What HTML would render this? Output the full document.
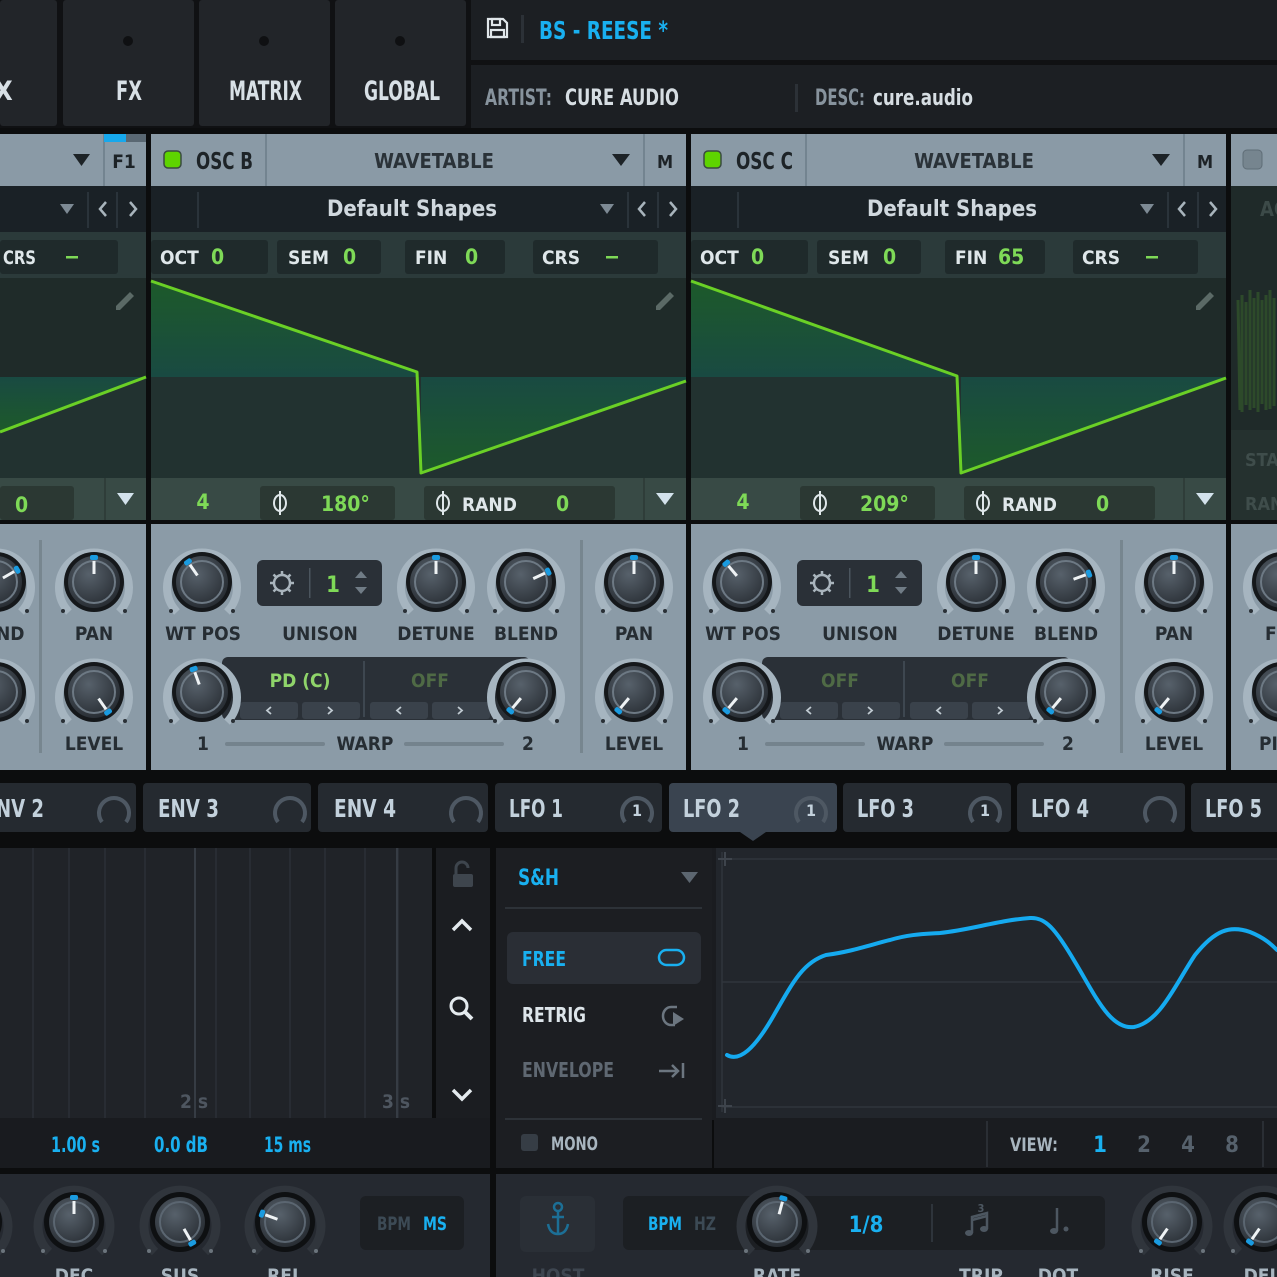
<!DOCTYPE html>
<html><head><meta charset="utf-8"><style>
html,body{margin:0;padding:0;background:#0b0c0d;width:1277px;height:1277px;overflow:hidden}
svg text{font-family:"Liberation Sans Narrow","DejaVu Sans Condensed","Liberation Sans",sans-serif;font-weight:bold}
</style></head><body>
<svg width="1277" height="1277" viewBox="0 0 1277 1277" xmlns="http://www.w3.org/2000/svg">
<defs>
<radialGradient id="kg" cx="40%" cy="35%" r="70%"><stop offset="0" stop-color="#57616b"/><stop offset="1" stop-color="#262b31"/></radialGradient>
<linearGradient id="wg" x1="0" y1="0" x2="0" y2="1"><stop offset="0" stop-color="#1d5a2a"/><stop offset="1" stop-color="#194a42"/></linearGradient>
<linearGradient id="wg2" x1="0" y1="0" x2="0" y2="1"><stop offset="0" stop-color="#194a42"/><stop offset="1" stop-color="#1d5a2a"/></linearGradient>
<symbol id="kl" overflow="visible">
<path d="M-25 30 A35 35 0 1 1 25 30" fill="none" stroke="#a6b5c0" stroke-width="8"/>
<circle r="30" fill="#15181b"/><circle r="26" fill="url(#kg)"/><circle r="21" fill="none" stroke="#6d7984" stroke-width="2"/>
<circle cx="-31" cy="29" r="2" fill="#2a3036"/><circle cx="31" cy="29" r="2" fill="#2a3036"/>
</symbol>
<symbol id="kd" overflow="visible">
<path d="M-25 30 A36 36 0 1 1 25 30" fill="none" stroke="#30353c" stroke-width="9"/>
<circle r="30" fill="#0e1012"/><circle r="25" fill="url(#kg)"/><circle r="20" fill="none" stroke="#5b6671" stroke-width="2"/>
<circle cx="-31" cy="29" r="2" fill="#6b747c"/><circle cx="31" cy="29" r="2" fill="#6b747c"/>
</symbol>
<symbol id="ind" overflow="visible"><line x1="0" y1="-8" x2="0" y2="-21" stroke="#eef2f4" stroke-width="3"/><rect x="-4" y="-27" width="8" height="5" rx="2" fill="#1a9be0"/></symbol>
</defs>

<rect x="0" y="0" width="1277" height="134" fill="#101113"/>
<rect x="0" y="0" width="57" height="126" rx="3" fill="#222529"/>
<rect x="63" y="0" width="131" height="126" rx="3" fill="#222529"/>
<rect x="199" y="0" width="131" height="126" rx="3" fill="#222529"/>
<rect x="335" y="0" width="131" height="126" rx="3" fill="#222529"/>
<circle cx="128" cy="41" r="5" fill="#0f1012"/><circle cx="264" cy="41" r="5" fill="#0f1012"/><circle cx="400" cy="41" r="5" fill="#0f1012"/>
<g font-size="27" fill="#d8e0e6"><text x="-6" y="100">X</text><text x="116" y="100" textLength="26" lengthAdjust="spacingAndGlyphs">FX</text><text x="229" y="100" textLength="73" lengthAdjust="spacingAndGlyphs">MATRIX</text><text x="364" y="100" textLength="76" lengthAdjust="spacingAndGlyphs">GLOBAL</text></g>
<rect x="471" y="0" width="806" height="60" fill="#1c1f23"/>
<rect x="471" y="65" width="806" height="63" fill="#1c1f23"/>
<g fill="none" stroke="#e0e6ea" stroke-width="2.2"><path d="M488 19h15l4 4v14h-19z"/><rect x="492" y="19" width="8" height="6"/><rect x="491" y="30" width="13" height="7"/></g>
<rect x="521" y="15" width="3" height="28" fill="#2c3137"/>
<text x="539" y="39" font-size="25" fill="#19b0f0" textLength="129" lengthAdjust="spacingAndGlyphs">BS - REESE *</text>
<text x="485" y="105" font-size="22" fill="#87939d" textLength="67" lengthAdjust="spacingAndGlyphs">ARTIST:</text>
<text x="565" y="105" font-size="22" fill="#d6dde2" font-weight="normal" textLength="114" lengthAdjust="spacingAndGlyphs">CURE AUDIO</text>
<rect x="795" y="84" width="3" height="28" fill="#2c3137"/>
<text x="815" y="105" font-size="22" fill="#87939d" textLength="50" lengthAdjust="spacingAndGlyphs">DESC:</text>
<text x="873" y="105" font-size="22" fill="#d6dde2" font-weight="normal" textLength="100" lengthAdjust="spacingAndGlyphs">cure.audio</text>

<rect x="0" y="128" width="1277" height="654" fill="#0c0d0e"/>

<rect x="0" y="134" width="146" height="52" fill="#8a9aa6"/>
<path d="M73 154h17l-8.5 12z" fill="#1d2327"/>
<rect x="103" y="134" width="2" height="52" fill="#738490"/>
<rect x="104" y="134" width="22" height="8" fill="#17a8ec"/><rect x="126" y="134" width="20" height="8" fill="#5a6873"/>
<text x="124" y="168" font-size="19" fill="#1d2327" text-anchor="middle">F1</text>
<rect x="0" y="186" width="146" height="46" fill="#1a2126"/>
<path d="M60 204h14l-7 10z" fill="#7d8a94"/>
<rect x="87" y="192" width="2" height="36" fill="#2a333a"/><rect x="116" y="192" width="2" height="36" fill="#2a333a"/>
<path d="M106 202l-6 7 6 7M130 202l6 7-6 7" fill="none" stroke="#a8b4bc" stroke-width="2.5"/>
<rect x="0" y="232" width="146" height="46" fill="#2b3a3a"/>
<rect x="0" y="240" width="118" height="34" rx="3" fill="#1f2a2b"/>
<text x="3" y="264" font-size="19" fill="#dfe7ea" textLength="33" lengthAdjust="spacingAndGlyphs">CRS</text><rect x="66" y="256" width="12" height="2.5" fill="#7ed957"/>
<rect x="0" y="278" width="146" height="99" fill="#1f2b29"/><rect x="0" y="377" width="146" height="101" fill="#223230"/>
<path d="M0 432L146 377L0 377z" fill="url(#wg2)"/>
<path d="M0 432L146 377" stroke="#6ad026" stroke-width="3" fill="none"/>
<path d="M116 306l14-14 4 4-14 14h-4z" fill="#5b6a66"/>
<rect x="0" y="478" width="146" height="42" fill="#384a45"/>
<rect x="0" y="486" width="74" height="34" rx="3" fill="#2b3833"/>
<text x="15" y="512" font-size="21" fill="#7ed957">0</text>
<rect x="104" y="478" width="2" height="42" fill="#2f3d39"/>
<path d="M117 493h17l-8.5 12z" fill="#d3e2ec"/>
<rect x="0" y="524" width="146" height="246" fill="#8b9ba7"/>
<rect x="39" y="540" width="3" height="213" fill="#77868f"/>
<use href="#kl" x="-4" y="582"/><g transform="translate(-4,582) rotate(60)"><use href="#ind"/></g>
<use href="#kl" x="-4" y="692"/>
<text x="-4" y="640" font-size="19" fill="#262d33">ND</text>
<use href="#kl" x="94" y="582"/><g transform="translate(94,582)"><use href="#ind"/></g>
<use href="#kl" x="94" y="692"/><g transform="translate(94,692) rotate(145)"><use href="#ind"/></g>
<g font-size="19" fill="#262d33" text-anchor="middle"><text x="94" y="640">PAN</text><text x="94" y="750">LEVEL</text></g>

<g>
<rect x="151" y="134" width="535" height="52" fill="#8a9aa6"/>
<rect x="164" y="151" width="17" height="17" rx="4" fill="#5ed400" stroke="#3a4a40" stroke-width="1.5"/>
<text x="196" y="169" font-size="23" fill="#1d2327" textLength="57" lengthAdjust="spacingAndGlyphs">OSC B</text>
<rect x="265" y="134" width="2" height="52" fill="#738490"/>
<text x="434" y="168" font-size="20" fill="#2a3238" text-anchor="middle" font-weight="normal">WAVETABLE</text>
<path d="M612 154h18l-9 12z" fill="#1d2327"/>
<rect x="643" y="134" width="2" height="52" fill="#738490"/>
<text x="665" y="168" font-size="18" fill="#1d2327" text-anchor="middle">M</text>
<rect x="151" y="186" width="535" height="46" fill="#1a2126"/>
<rect x="197" y="192" width="2" height="36" fill="#2a333a"/>
<text x="412" y="216" font-size="22" fill="#d0d8de" text-anchor="middle" font-weight="normal">Default Shapes</text>
<path d="M600 204h14l-7 10z" fill="#7d8a94"/>
<rect x="627" y="192" width="2" height="36" fill="#2a333a"/><rect x="657" y="192" width="2" height="36" fill="#2a333a"/>
<path d="M645 202l-6 7 6 7M670 202l6 7-6 7" fill="none" stroke="#a8b4bc" stroke-width="2.5"/>
<rect x="151" y="232" width="535" height="46" fill="#2b3a3a"/>
<rect x="151" y="240" width="117" height="34" rx="3" fill="#1f2a2b"/>
<rect x="277" y="240" width="104" height="34" rx="3" fill="#1f2a2b"/>
<rect x="405" y="240" width="100" height="34" rx="3" fill="#1f2a2b"/>
<rect x="533" y="240" width="125" height="34" rx="3" fill="#1f2a2b"/>
<g font-size="19" fill="#dfe7ea"><text x="160" y="264">OCT</text><text x="288" y="264">SEM</text><text x="415" y="264">FIN</text><text x="542" y="264">CRS</text></g>
<g font-size="21" fill="#7ed957" font-weight="normal"><text x="211" y="264">0</text><text x="343" y="264">0</text><text x="465" y="264">0</text></g>
<rect x="606" y="256" width="12" height="2.5" fill="#7ed957"/>
<rect x="151" y="278" width="535" height="99" fill="#1f2b29"/><rect x="151" y="377" width="535" height="101" fill="#223230"/>
<path d="M151 281L417 372L417 377L151 377z" fill="url(#wg)"/>
<path d="M421 377L421 473L686 381L686 377z" fill="url(#wg2)"/>
<path d="M151 281L417 372L421 473L686 381" stroke="#6ad026" stroke-width="3" fill="none" stroke-linejoin="round"/>
<path d="M656 306l14-14 4 4-14 14h-4z" fill="#5b6a66"/>
<rect x="151" y="478" width="535" height="42" fill="#384a45"/>
<text x="203" y="509" font-size="21" fill="#7ed957" text-anchor="middle" font-weight="normal">4</text>
<rect x="260" y="486" width="135" height="34" rx="3" fill="#2b3833"/>
<rect x="424" y="486" width="191" height="34" rx="3" fill="#2b3833"/>
<g fill="none" stroke="#dfe7ea" stroke-width="2"><ellipse cx="280" cy="503" rx="6" ry="8"/><line x1="280" y1="491" x2="280" y2="515"/><ellipse cx="443" cy="503" rx="6" ry="8"/><line x1="443" y1="491" x2="443" y2="515"/></g>
<text x="321" y="511" font-size="21" fill="#7ed957" font-weight="normal">180°</text>
<text x="462" y="511" font-size="19" fill="#dfe7ea">RAND</text>
<text x="556" y="511" font-size="21" fill="#7ed957" font-weight="normal">0</text>
<rect x="643" y="478" width="2" height="42" fill="#2f3d39"/>
<path d="M656 493h18l-9 12z" fill="#d3e2ec"/>
<rect x="151" y="524" width="535" height="246" fill="#8b9ba7"/>
<rect x="580" y="540" width="3" height="213" fill="#77868f"/>
<rect x="257" y="560" width="125" height="46" rx="6" fill="#2a3037"/>
<g transform="translate(282,583)" fill="none" stroke="#aab5bd" stroke-width="2.5"><circle r="8"/><path d="M0-12v4M0 8v4M-12 0h4M8 0h4M-8.5-8.5l3 3M5.5 5.5l3 3M-8.5 8.5l3-3M5.5-5.5l3-3"/></g>
<rect x="309" y="568" width="1.5" height="30" fill="#4b555e"/>
<text x="333" y="592" font-size="22" fill="#7ed957" text-anchor="middle" font-weight="normal">1</text>
<path d="M355 578l6-7 6 7zM355 587l6 7 6-7z" fill="#707c86"/>
<rect x="222" y="657" width="308" height="63" rx="6" fill="#2a3037"/>
<rect x="363" y="661" width="2" height="56" fill="#3e4750"/>
<g fill="#3a424b"><rect x="240" y="702" width="58" height="17" rx="3"/><rect x="302" y="702" width="58" height="17" rx="3"/><rect x="370" y="702" width="58" height="17" rx="3"/><rect x="432" y="702" width="58" height="17" rx="3"/></g>
<path d="M271 707l-4 3.5 4 3.5M328 707l4 3.5-4 3.5M401 707l-4 3.5 4 3.5M458 707l4 3.5-4 3.5" stroke="#c0cad1" stroke-width="1.8" fill="none"/>
<text x="300" y="687" font-size="19" fill="#8fd46a" text-anchor="middle" font-weight="normal">PD (C)</text>
<text x="430" y="687" font-size="19" fill="#4f6a45" text-anchor="middle" font-weight="normal">OFF</text>
<rect x="225" y="742" width="100" height="4" rx="2" fill="#74838d"/><rect x="404" y="742" width="100" height="4" rx="2" fill="#74838d"/>
<use href="#kl" x="202" y="582"/><g transform="translate(202,582) rotate(-35)"><use href="#ind"/></g>
<use href="#kl" x="436" y="582"/><g transform="translate(436,582)"><use href="#ind"/></g>
<use href="#kl" x="526" y="582"/><g transform="translate(526,582) rotate(65)"><use href="#ind"/></g>
<use href="#kl" x="634" y="582"/><g transform="translate(634,582)"><use href="#ind"/></g>
<use href="#kl" x="634" y="692"/><g transform="translate(634,692) rotate(-140)"><use href="#ind"/></g>
<use href="#kl" x="202" y="692"/><g transform="translate(202,692) rotate(-20)"><use href="#ind"/></g>
<use href="#kl" x="526" y="692"/><g transform="translate(526,692) rotate(-140)"><use href="#ind"/></g>
<g font-size="19" fill="#262d33" text-anchor="middle"><text x="203" y="640">WT POS</text><text x="320" y="640">UNISON</text><text x="436" y="640">DETUNE</text><text x="526" y="640">BLEND</text><text x="634" y="640">PAN</text><text x="634" y="750">LEVEL</text><text x="203" y="750">1</text><text x="365" y="750">WARP</text><text x="528" y="750">2</text></g>
</g>
<g>
<rect x="691" y="134" width="535" height="52" fill="#8a9aa6"/>
<rect x="704" y="151" width="17" height="17" rx="4" fill="#5ed400" stroke="#3a4a40" stroke-width="1.5"/>
<text x="736" y="169" font-size="23" fill="#1d2327" textLength="57" lengthAdjust="spacingAndGlyphs">OSC C</text>
<rect x="805" y="134" width="2" height="52" fill="#738490"/>
<text x="974" y="168" font-size="20" fill="#2a3238" text-anchor="middle" font-weight="normal">WAVETABLE</text>
<path d="M1152 154h18l-9 12z" fill="#1d2327"/>
<rect x="1183" y="134" width="2" height="52" fill="#738490"/>
<text x="1205" y="168" font-size="18" fill="#1d2327" text-anchor="middle">M</text>
<rect x="691" y="186" width="535" height="46" fill="#1a2126"/>
<rect x="737" y="192" width="2" height="36" fill="#2a333a"/>
<text x="952" y="216" font-size="22" fill="#d0d8de" text-anchor="middle" font-weight="normal">Default Shapes</text>
<path d="M1140 204h14l-7 10z" fill="#7d8a94"/>
<rect x="1167" y="192" width="2" height="36" fill="#2a333a"/><rect x="1197" y="192" width="2" height="36" fill="#2a333a"/>
<path d="M1185 202l-6 7 6 7M1210 202l6 7-6 7" fill="none" stroke="#a8b4bc" stroke-width="2.5"/>
<rect x="691" y="232" width="535" height="46" fill="#2b3a3a"/>
<rect x="691" y="240" width="117" height="34" rx="3" fill="#1f2a2b"/>
<rect x="817" y="240" width="104" height="34" rx="3" fill="#1f2a2b"/>
<rect x="945" y="240" width="100" height="34" rx="3" fill="#1f2a2b"/>
<rect x="1073" y="240" width="125" height="34" rx="3" fill="#1f2a2b"/>
<g font-size="19" fill="#dfe7ea"><text x="700" y="264">OCT</text><text x="828" y="264">SEM</text><text x="955" y="264">FIN</text><text x="1082" y="264">CRS</text></g>
<g font-size="21" fill="#7ed957" font-weight="normal"><text x="751" y="264">0</text><text x="883" y="264">0</text><text x="998" y="264">65</text></g>
<rect x="1146" y="256" width="12" height="2.5" fill="#7ed957"/>
<rect x="691" y="278" width="535" height="99" fill="#1f2b29"/><rect x="691" y="377" width="535" height="101" fill="#223230"/>
<path d="M691 281L957 376L957 377L691 377z" fill="url(#wg)"/>
<path d="M961 377L961 473L1226 378L1226 377z" fill="url(#wg2)"/>
<path d="M691 281L957 376L961 473L1226 378" stroke="#6ad026" stroke-width="3" fill="none" stroke-linejoin="round"/>
<path d="M1196 306l14-14 4 4-14 14h-4z" fill="#5b6a66"/>
<rect x="691" y="478" width="535" height="42" fill="#384a45"/>
<text x="743" y="509" font-size="21" fill="#7ed957" text-anchor="middle" font-weight="normal">4</text>
<rect x="800" y="486" width="135" height="34" rx="3" fill="#2b3833"/>
<rect x="964" y="486" width="191" height="34" rx="3" fill="#2b3833"/>
<g fill="none" stroke="#dfe7ea" stroke-width="2"><ellipse cx="820" cy="503" rx="6" ry="8"/><line x1="820" y1="491" x2="820" y2="515"/><ellipse cx="983" cy="503" rx="6" ry="8"/><line x1="983" y1="491" x2="983" y2="515"/></g>
<text x="860" y="511" font-size="21" fill="#7ed957" font-weight="normal">209°</text>
<text x="1002" y="511" font-size="19" fill="#dfe7ea">RAND</text>
<text x="1096" y="511" font-size="21" fill="#7ed957" font-weight="normal">0</text>
<rect x="1183" y="478" width="2" height="42" fill="#2f3d39"/>
<path d="M1196 493h18l-9 12z" fill="#d3e2ec"/>
<rect x="691" y="524" width="535" height="246" fill="#8b9ba7"/>
<rect x="1120" y="540" width="3" height="213" fill="#77868f"/>
<rect x="797" y="560" width="125" height="46" rx="6" fill="#2a3037"/>
<g transform="translate(822,583)" fill="none" stroke="#aab5bd" stroke-width="2.5"><circle r="8"/><path d="M0-12v4M0 8v4M-12 0h4M8 0h4M-8.5-8.5l3 3M5.5 5.5l3 3M-8.5 8.5l3-3M5.5-5.5l3-3"/></g>
<rect x="849" y="568" width="1.5" height="30" fill="#4b555e"/>
<text x="873" y="592" font-size="22" fill="#7ed957" text-anchor="middle" font-weight="normal">1</text>
<path d="M895 578l6-7 6 7zM895 587l6 7 6-7z" fill="#707c86"/>
<rect x="762" y="657" width="308" height="63" rx="6" fill="#2a3037"/>
<rect x="903" y="661" width="2" height="56" fill="#3e4750"/>
<g fill="#3a424b"><rect x="780" y="702" width="58" height="17" rx="3"/><rect x="842" y="702" width="58" height="17" rx="3"/><rect x="910" y="702" width="58" height="17" rx="3"/><rect x="972" y="702" width="58" height="17" rx="3"/></g>
<path d="M811 707l-4 3.5 4 3.5M868 707l4 3.5-4 3.5M941 707l-4 3.5 4 3.5M998 707l4 3.5-4 3.5" stroke="#c0cad1" stroke-width="1.8" fill="none"/>
<text x="840" y="687" font-size="19" fill="#4f6a45" text-anchor="middle" font-weight="normal">OFF</text>
<text x="970" y="687" font-size="19" fill="#4f6a45" text-anchor="middle" font-weight="normal">OFF</text>
<rect x="765" y="742" width="100" height="4" rx="2" fill="#74838d"/><rect x="944" y="742" width="100" height="4" rx="2" fill="#74838d"/>
<use href="#kl" x="742" y="582"/><g transform="translate(742,582) rotate(-40)"><use href="#ind"/></g>
<use href="#kl" x="976" y="582"/><g transform="translate(976,582)"><use href="#ind"/></g>
<use href="#kl" x="1066" y="582"/><g transform="translate(1066,582) rotate(70)"><use href="#ind"/></g>
<use href="#kl" x="1174" y="582"/><g transform="translate(1174,582)"><use href="#ind"/></g>
<use href="#kl" x="1174" y="692"/><g transform="translate(1174,692) rotate(-140)"><use href="#ind"/></g>
<use href="#kl" x="742" y="692"/><g transform="translate(742,692) rotate(-140)"><use href="#ind"/></g>
<use href="#kl" x="1066" y="692"/><g transform="translate(1066,692) rotate(-140)"><use href="#ind"/></g>
<g font-size="19" fill="#262d33" text-anchor="middle"><text x="743" y="640">WT POS</text><text x="860" y="640">UNISON</text><text x="976" y="640">DETUNE</text><text x="1066" y="640">BLEND</text><text x="1174" y="640">PAN</text><text x="1174" y="750">LEVEL</text><text x="743" y="750">1</text><text x="905" y="750">WARP</text><text x="1068" y="750">2</text></g>
</g>
<rect x="1231" y="134" width="46" height="52" fill="#8a9aa6"/>
<rect x="1243" y="150" width="19" height="19" rx="4" fill="#76858f" stroke="#5f6d77"/>
<rect x="1231" y="186" width="46" height="292" fill="#1f2a29"/>
<text x="1260" y="216" font-size="20" fill="#3c4a48">AC</text>
<path d="M1238 300 L1240 410 M1242 295 V412 M1246 302 V405 M1250 290 V410 M1254 298 V408 M1258 292 V412 M1262 300 V404 M1266 295 V410 M1270 290 V409 M1274 298 V406" stroke="#2d4a2a" stroke-width="3"/>
<rect x="1231" y="430" width="46" height="90" fill="#25312f"/>
<text x="1245" y="466" font-size="18" fill="#3f4d4b">STA</text><text x="1245" y="510" font-size="18" fill="#3f4d4b">RAN</text>
<rect x="1231" y="524" width="46" height="246" fill="#8b9ba7"/>
<use href="#kl" x="1282" y="582"/><use href="#kl" x="1282" y="692"/>
<text x="1265" y="640" font-size="19" fill="#262d33">F</text><text x="1259" y="750" font-size="19" fill="#262d33">PI</text>

<rect x="0" y="770" width="1277" height="78" fill="#0c0d0e"/>
<g fill="#252a30"><rect x="-5" y="783" width="141" height="49" rx="4"/><rect x="143" y="783" width="168" height="49" rx="4"/><rect x="318" y="783" width="170" height="49" rx="4"/><rect x="495" y="783" width="167" height="49" rx="4"/><rect x="843" y="783" width="168" height="49" rx="4"/><rect x="1017" y="783" width="168" height="49" rx="4"/><rect x="1191" y="783" width="100" height="49" rx="4"/></g>
<rect x="669" y="783" width="168" height="49" rx="4" fill="#3a4450"/>
<path d="M740 832h26l-13 9z" fill="#3a4450"/>
<g font-size="25" fill="#c3d1dc" lengthAdjust="spacingAndGlyphs"><text x="-4" y="817" textLength="48" lengthAdjust="spacingAndGlyphs">NV 2</text><text x="158" y="817" textLength="61" lengthAdjust="spacingAndGlyphs">ENV 3</text><text x="334" y="817" textLength="62" lengthAdjust="spacingAndGlyphs">ENV 4</text><text x="509" y="817" textLength="54" lengthAdjust="spacingAndGlyphs">LFO 1</text><text x="683" y="817" textLength="57" lengthAdjust="spacingAndGlyphs">LFO 2</text><text x="857" y="817" textLength="57" lengthAdjust="spacingAndGlyphs">LFO 3</text><text x="1031" y="817" textLength="58" lengthAdjust="spacingAndGlyphs">LFO 4</text><text x="1205" y="817" textLength="57" lengthAdjust="spacingAndGlyphs">LFO 5</text></g>
<g fill="none" stroke="#4e5863" stroke-width="4"><path d="M102 822a15 15 0 1 1 24 0"/><path d="M278 822a15 15 0 1 1 24 0"/><path d="M454 822a15 15 0 1 1 24 0"/><path d="M625 822a15 15 0 1 1 24 0"/><path d="M799 822a15 15 0 1 1 24 0"/><path d="M973 822a15 15 0 1 1 24 0"/><path d="M1148 822a15 15 0 1 1 24 0"/></g>
<g font-size="16" fill="#c3d1dc" text-anchor="middle"><text x="637" y="816">1</text><text x="811" y="816">1</text><text x="985" y="816">1</text></g>

<rect x="0" y="848" width="432" height="270" fill="#202328"/>
<g stroke="#2b3037" stroke-width="1.5"><path d="M33 848V1118M69 848V1118M105 848V1118M145 848V1118M216 848V1118M250 848V1118M290 848V1118M325 848V1118M365 848V1118M398 848V1118"/></g>
<g stroke="#363c44" stroke-width="2"><path d="M195 848V1118M397 848V1118"/></g>
<g font-size="19" fill="#4e5660" font-weight="normal"><text x="180" y="1108">2 s</text><text x="382" y="1108">3 s</text></g>
<rect x="436" y="848" width="54" height="270" fill="#1b1d21"/>
<g fill="none" stroke="#3e454d" stroke-width="3"><path d="M456 874v-6a6 6 0 0 1 12 0"/></g><rect x="453" y="874" width="20" height="13" rx="2" fill="#3e454d"/>
<path d="M453 930l9-9 9 9M453 1090l9 9 9-9" fill="none" stroke="#e4eaee" stroke-width="3.5"/>
<circle cx="459" cy="1006" r="8" fill="none" stroke="#e4eaee" stroke-width="3"/><path d="M465 1012l7 7" stroke="#e4eaee" stroke-width="4"/>
<rect x="0" y="1118" width="490" height="50" fill="#191b1f"/>
<g font-size="21" fill="#19b0f0" font-weight="normal"><text x="51" y="1152" textLength="49" lengthAdjust="spacingAndGlyphs">1.00 s</text><text x="154" y="1152" textLength="54" lengthAdjust="spacingAndGlyphs">0.0 dB</text><text x="264" y="1152" textLength="47" lengthAdjust="spacingAndGlyphs">15 ms</text></g>
<rect x="0" y="1174" width="490" height="103" fill="#252930"/>
<use href="#kd" x="-28" y="1222"/>
<use href="#kd" x="74" y="1222"/><g transform="translate(74,1222)"><use href="#ind"/></g>
<use href="#kd" x="180" y="1222"/><g transform="translate(180,1222) rotate(150)"><use href="#ind"/></g>
<use href="#kd" x="285" y="1222"/><g transform="translate(285,1222) rotate(-70)"><use href="#ind"/></g>
<rect x="360" y="1196" width="104" height="54" rx="6" fill="#1c1f23"/>
<text x="377" y="1230" font-size="19" fill="#3c4a55" textLength="34" lengthAdjust="spacingAndGlyphs">BPM</text><text x="423" y="1230" font-size="19" fill="#19b0f0" textLength="24" lengthAdjust="spacingAndGlyphs">MS</text>
<g font-size="19" fill="#a8b5bf" text-anchor="middle"><text x="74" y="1282">DEC</text><text x="180" y="1282">SUS</text><text x="285" y="1282">REL</text></g>

<rect x="496" y="848" width="216" height="320" fill="#1c1e22"/>
<text x="518" y="885" font-size="22" fill="#19b0f0" textLength="41" lengthAdjust="spacingAndGlyphs">S&amp;H</text>
<path d="M681 872h17l-8.5 11z" fill="#5c6670"/>
<rect x="505" y="907" width="197" height="2" fill="#2d3238"/>
<rect x="507" y="932" width="194" height="52" rx="6" fill="#2a2e35"/>
<text x="522" y="966" font-size="20" fill="#19b0f0" textLength="44" lengthAdjust="spacingAndGlyphs">FREE</text>
<rect x="659" y="950" width="25" height="15" rx="7.5" fill="none" stroke="#19b0f0" stroke-width="2.5"/>
<text x="522" y="1022" font-size="20" fill="#dde5ea" textLength="64" lengthAdjust="spacingAndGlyphs">RETRIG</text>
<path d="M675 1025h-4a8 9 0 0 1 0-18h6" fill="none" stroke="#6c7680" stroke-width="2.5"/><path d="M673 1012l11 7-11 7z" fill="#6c7680"/>
<text x="522" y="1077" font-size="20" fill="#5f6872" textLength="92" lengthAdjust="spacingAndGlyphs">ENVELOPE</text>
<path d="M659 1071h18M672 1065l6 6-6 6M683 1063v15" fill="none" stroke="#6c7680" stroke-width="2.5"/>
<rect x="505" y="1118" width="197" height="2" fill="#2d3238"/>
<rect x="521" y="1134" width="17" height="17" rx="3" fill="#363d45"/>
<text x="551" y="1150" font-size="19" fill="#a8b5bf" textLength="47" lengthAdjust="spacingAndGlyphs">MONO</text>

<rect x="712" y="848" width="565" height="272" fill="#1a1c20"/>
<rect x="716" y="848" width="561" height="270" fill="#22262c"/>
<g stroke="#30353c" stroke-width="1.5"><path d="M722 859H1277M722 982H1277M722 1107H1277M722 852V1112"/></g>
<path d="M718 859h14M725 852v14M718 1106h14M725 1099v14" stroke="#3e444c" stroke-width="2"/>
<path d="M727 1055C739 1062 754 1050 774 1015C794 980 804 962 826 955C850 952 870 945 890 940C910 934 925 934 940 933C970 930 1000 920 1030 918C1045 917 1055 928 1075 962C1095 995 1110 1030 1134 1027C1160 1022 1175 985 1195 955C1215 930 1230 925 1250 932C1265 938 1272 945 1277 950" fill="none" stroke="#15aaf0" stroke-width="4" stroke-linecap="round"/>
<rect x="714" y="1120" width="563" height="48" fill="#1a1c20"/>
<rect x="986" y="1121" width="2" height="46" fill="#2a2e34"/><rect x="1262" y="1121" width="2" height="46" fill="#2a2e34"/>
<text x="1010" y="1151" font-size="19" fill="#a8b5bf" textLength="48" lengthAdjust="spacingAndGlyphs">VIEW:</text>
<g font-size="22" font-weight="normal" text-anchor="middle"><text x="1100" y="1152" fill="#19b0f0">1</text><text x="1144" y="1152" fill="#56616c">2</text><text x="1188" y="1152" fill="#56616c">4</text><text x="1232" y="1152" fill="#56616c">8</text></g>

<rect x="496" y="1174" width="781" height="103" fill="#252930"/>
<rect x="520" y="1196" width="75" height="56" rx="6" fill="#2a2f36"/>
<g fill="none" stroke="#1c6f96" stroke-width="2.5"><circle cx="558" cy="1207" r="4"/><path d="M558 1211v23M552 1217h12M548 1224q2 10 10 10q8 0 10-10"/></g>
<rect x="623" y="1196" width="482" height="54" rx="6" fill="#1c1f23"/>
<text x="648" y="1230" font-size="19" fill="#19b0f0" textLength="34" lengthAdjust="spacingAndGlyphs">BPM</text><text x="694" y="1230" font-size="19" fill="#3c4a55" textLength="22" lengthAdjust="spacingAndGlyphs">HZ</text>
<text x="866" y="1232" font-size="22" fill="#19b0f0" text-anchor="middle" font-weight="normal">1/8</text>
<rect x="931" y="1204" width="2" height="38" fill="#2e343b"/>
<text x="981" y="1212" font-size="11" fill="#4d5761" text-anchor="middle">3</text>
<g fill="none" stroke="#4d5761" stroke-width="2.5"><path d="M972 1233v-16l15-4v16M972 1220l15-4"/><path d="M1057 1231v-23"/></g>
<g fill="#4d5761"><ellipse cx="969" cy="1233" rx="4" ry="3"/><ellipse cx="984" cy="1229" rx="4" ry="3"/><ellipse cx="1054" cy="1231" rx="4" ry="3"/><circle cx="1066" cy="1229" r="2.5"/></g>
<use href="#kd" x="777" y="1222"/><g transform="translate(777,1222) rotate(15)"><use href="#ind"/></g>
<use href="#kd" x="1172" y="1222"/><g transform="translate(1172,1222) rotate(-145)"><use href="#ind"/></g>
<use href="#kd" x="1264" y="1222"/><g transform="translate(1264,1222) rotate(-145)"><use href="#ind"/></g>
<g font-size="19" fill="#a8b5bf" text-anchor="middle"><text x="558" y="1282" fill="#3e4650">HOST</text><text x="777" y="1282">RATE</text><text x="981" y="1282">TRIP</text><text x="1058" y="1282">DOT</text><text x="1172" y="1282">RISE</text><text x="1262" y="1282">DEL</text></g>

<rect x="490" y="840" width="6" height="437" fill="#0c0d0e"/>
<rect x="0" y="1168" width="1277" height="6" fill="#0c0d0e"/>
</svg>
</body></html>
